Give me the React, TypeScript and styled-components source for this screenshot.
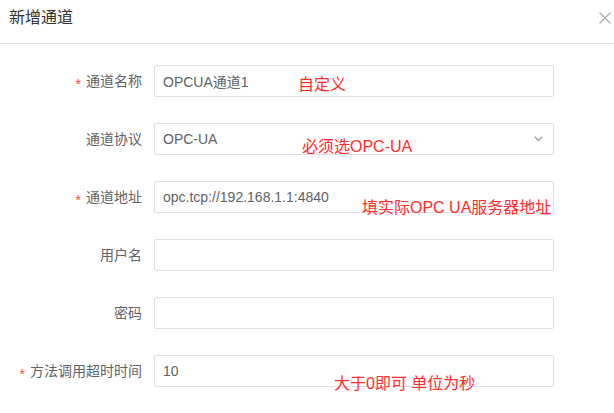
import React from "react";
import styled, { createGlobalStyle } from "styled-components";

const GlobalStyle = createGlobalStyle`
  html, body {
    margin: 0;
    padding: 0;
    background: #ffffff;
  }
  body {
    font-family: "Liberation Sans", "Noto Sans CJK SC", sans-serif;
    color: #606266;
  }
`;

const Dialog = styled.div`
  width: 614px;
  height: 413px;
  overflow: hidden;
  background: #fff;
`;

const Header = styled.div`
  height: 44px;
  border-bottom: 1px solid #e6e6e6;
  display: flex;
  align-items: center;
  justify-content: space-between;
  padding: 0 3px 0 9px;
  box-sizing: border-box;
`;

const Title = styled.span`
  font-size: 16px;
  color: #303133;
  line-height: 20px;
  margin-top: -8px;
`;

const CloseButton = styled.span`
  display: flex;
  width: 12px;
  height: 12px;
  margin-top: -8px;
`;

const Form = styled.div`
  display: flex;
  flex-direction: column;
  gap: 26px;
  padding-top: 21px;
`;

const Row = styled.div`
  position: relative;
  display: flex;
  align-items: center;
  height: 32px;
`;

const Label = styled.label`
  width: 154px;
  box-sizing: border-box;
  padding-right: 12px;
  text-align: right;
  font-size: 14px;
  color: #606266;
  line-height: 32px;
`;

const Star = styled.span`
  display: inline-block;
  color: #f04a22;
  margin-right: 5px;
  transform: translateY(3px);
`;

const Field = styled.div`
  position: relative;
  width: 400px;
  height: 32px;
  box-sizing: border-box;
  border: 1px solid #dcdfe6;
  border-radius: 2px;
  display: flex;
  align-items: center;
  padding: 0 8px;
  font-size: 14px;
  color: #606266;
`;

const Arrow = styled.span`
  position: absolute;
  right: 10px;
  top: 50%;
  margin-top: -3px;
  display: flex;
`;

const Note = styled.span<{ $x: number; $y: number }>`
  position: absolute;
  left: ${(p) => p.$x}px;
  top: ${(p) => p.$y}px;
  font-size: 16px;
  line-height: 18px;
  color: #ff2d2d;
  white-space: pre;
`;

type Item = {
  label: string;
  value: string;
  required?: boolean;
  select?: boolean;
  note?: { text: string; x: number; y: number };
};

const items: Item[] = [
  { label: "通道名称", value: "OPCUA通道1", required: true, note: { text: "自定义", x: 298, y: 11 } },
  { label: "通道协议", value: "OPC-UA", select: true, note: { text: "必须选OPC-UA", x: 302, y: 15 } },
  {
    label: "通道地址",
    value: "opc.tcp://192.168.1.1:4840",
    required: true,
    note: { text: "填实际OPC UA服务器地址", x: 362, y: 18 },
  },
  { label: "用户名", value: "" },
  { label: "密码", value: "" },
  {
    label: "方法调用超时时间",
    value: "10",
    required: true,
    note: { text: "大于0即可 单位为秒", x: 334, y: 20 },
  },
];

export default function App() {
  return (
    <Dialog>
      <GlobalStyle />
      <Header>
        <Title>新增通道</Title>
        <CloseButton>
          <svg width="12" height="12" viewBox="0 0 12 12">
            <path d="M0.5 0.5 L11.5 11.5 M11.5 0.5 L0.5 11.5" stroke="#a8abb2" strokeWidth="1.1" fill="none" />
          </svg>
        </CloseButton>
      </Header>
      <Form>
        {items.map((it) => (
          <Row key={it.label}>
            <Label>
              {it.required && <Star>*</Star>}
              {it.label}
            </Label>
            <Field>
              {it.value}
              {it.select && (
                <Arrow>
                  <svg width="9" height="6" viewBox="0 0 9 6">
                    <path d="M0.8 0.8 L4.5 4.6 L8.2 0.8" stroke="#9a9da5" strokeWidth="1.3" fill="none" />
                  </svg>
                </Arrow>
              )}
            </Field>
            {it.note && (
              <Note $x={it.note.x} $y={it.note.y}>
                {it.note.text}
              </Note>
            )}
          </Row>
        ))}
      </Form>
    </Dialog>
  );
}
